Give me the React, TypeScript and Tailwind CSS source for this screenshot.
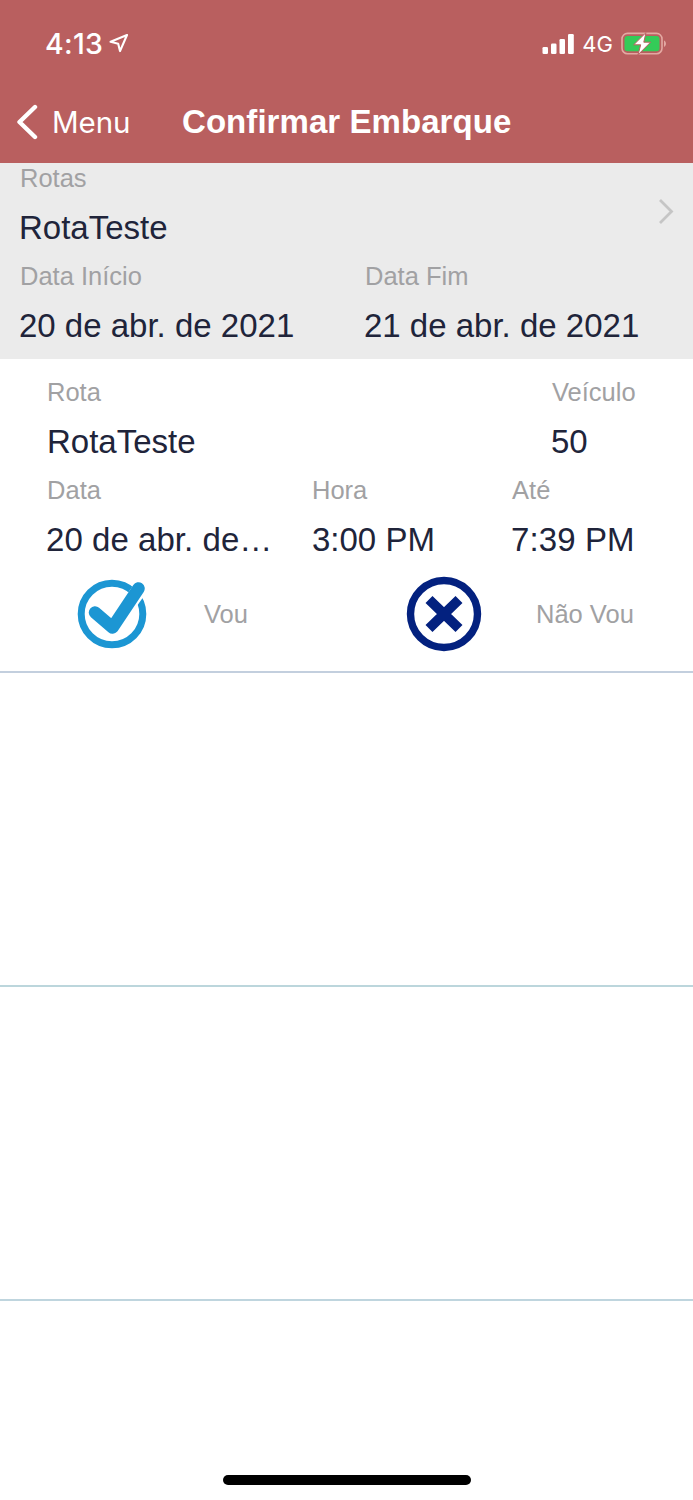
import React from "react";

function Field({ label, value, className = "" }: { label: string; value: string; className?: string }) {
  return (
    <div className={`flex flex-col whitespace-nowrap ${className}`}>
      <span className="pl-px text-[25.5px] leading-[30px] text-[#a1a1a3]">{label}</span>
      <span className="pt-px text-[33px] leading-[67px] text-[#20243a]">{value}</span>
    </div>
  );
}

function StatusBar() {
  return (
    <div className="flex h-[87px] items-center pl-[45px] pr-[26px] text-white">
      <span className="w-[59px] pt-px font-['Inter'] text-[28.5px] leading-none font-medium tracking-[0.3px]">4:13</span>
      <svg className="ml-[5px] h-5 w-5" viewBox="0 0 20 20" fill="none" stroke="currentColor" strokeWidth="2.1" strokeLinejoin="round">
        <path d="M18 1 1.6 7.8l7.6 1.9 1.8 7.4z" />
      </svg>
      <svg className="ml-auto h-[22px] w-8" viewBox="0 0 32 22" fill="currentColor">
        <rect x="0.5" y="14" width="5.5" height="7" rx="1.3" />
        <rect x="9" y="10.5" width="5.5" height="10.5" rx="1.3" />
        <rect x="17.5" y="6" width="5.5" height="15" rx="1.3" />
        <rect x="26" y="1" width="5.8" height="20" rx="1.3" />
      </svg>
      <span className="ml-2 font-['Inter'] text-[22px] leading-none">4G</span>
      <svg className="ml-[8px] h-6 w-[46px]" viewBox="0 0 46 24">
        <rect x="1" y="1.4" width="40" height="20.4" rx="5.5" fill="none" stroke="#e3a9a2" strokeWidth="1.6" />
        <rect x="3.5" y="3.9" width="35" height="15.4" rx="3" fill="#34cb58" />
        <path d="M43 8.4c2.6 1 2.6 5.4 0 6.4z" fill="#e3a9a2" />
        <path d="M25 .6 12.7 12.8h7L17 22.8l12.6-12.6h-6.8z" fill="#fff" stroke="#b95f5f" strokeWidth="1" />
      </svg>
    </div>
  );
}

export default function App() {
  return (
    <div className="flex h-[1500px] w-[693px] flex-col overflow-hidden bg-white font-['Liberation_Sans',sans-serif]">
      <header className="h-[163px] shrink-0 bg-[#b95f5f] text-white">
        <StatusBar />
        <div className="flex h-[70px] items-center pl-[16px]">
          <svg className="h-[36px] w-[22px]" viewBox="0 0 22 36" fill="none" stroke="currentColor" strokeWidth="4.4" strokeLinecap="round" strokeLinejoin="round">
            <path d="M19 3 3.5 18 19 33" />
          </svg>
          <span className="ml-[14px] w-[130px] pt-px font-['Inter'] text-[29.5px] leading-none tracking-[-0.1px]">Menu</span>
          <h1 className="pb-[2px] text-[33px] leading-none font-bold tracking-[0.06px] whitespace-nowrap">Confirmar Embarque</h1>
        </div>
      </header>

      <section className="flex h-[196px] shrink-0 flex-col bg-[#ebebeb] pl-[19px]">
        <div className="flex items-center justify-between pr-[18px]">
          <Field label="Rotas" value="RotaTeste" />
          <svg className="h-[26px] w-4" viewBox="0 0 16 26" fill="none" stroke="#c5c5c5" strokeWidth="2.8">
            <path d="M1 1 12.5 12.5 1 24" />
          </svg>
        </div>
        <div className="flex">
          <Field label="Data Início" value="20 de abr. de 2021" className="w-[345px]" />
          <Field label="Data Fim" value="21 de abr. de 2021" />
        </div>
      </section>

      <main className="flex flex-col">
        <article className="h-[314px] border-b-2 border-[#c3cfde] pt-[18px] pl-[46px]">
          <div className="flex">
            <Field label="Rota" value="RotaTeste" className="w-[505px] [&>span:last-child]:pl-px" />
            <Field label="Veículo" value="50" />
          </div>
          <div className="flex">
            <Field label="Data" value="20 de abr. de…" className="w-[265px] tracking-[0.05px]" />
            <Field label="Hora" value="3:00 PM" className="w-[200px] [&>span:last-child]:pl-px" />
            <Field label="Até" value="7:39 PM" className="tracking-[0.1px]" />
          </div>
          <div className="flex h-[82px] items-center text-[25.5px] leading-none text-[#a1a1a3]">
            <button className="flex w-[360px] items-center pl-[31px]">
              <svg className="h-[72px] w-[70px]" viewBox="0 0 70 72" fill="none">
                <circle cx="35" cy="36" r="30.8" stroke="#1c96d3" strokeWidth="7" />
                <path d="M18 36 35 50 62.5 11.5" stroke="#fff" strokeWidth="15" strokeLinecap="round" />
                <path d="M18 34.5 35.5 49.5 61.5 10.5" stroke="#1c96d3" strokeWidth="12.5" strokeLinecap="round" strokeLinejoin="round" />
              </svg>
              <span className="ml-[57px] pt-px">Vou</span>
            </button>
            <button className="flex items-center">
              <svg className="h-[76px] w-[76px]" viewBox="0 0 76 76" fill="none" stroke="#03217f">
                <circle cx="38" cy="38" r="33.5" strokeWidth="7.4" />
                <path d="m23 23.5 30 29M53 23.5 23 52.5" strokeWidth="10" strokeLinejoin="round" />
              </svg>
              <span className="ml-[54px] pt-px whitespace-nowrap">Não Vou</span>
            </button>
          </div>
        </article>
        <div className="h-[314px] border-b-2 border-[#bcd6dc]" />
        <div className="h-[314px] border-b-2 border-[#bfd5de]" />
      </main>

      <div className="mt-auto mb-[15px] ml-[223px] h-[10px] w-[248px] rounded-full bg-black" />
    </div>
  );
}
